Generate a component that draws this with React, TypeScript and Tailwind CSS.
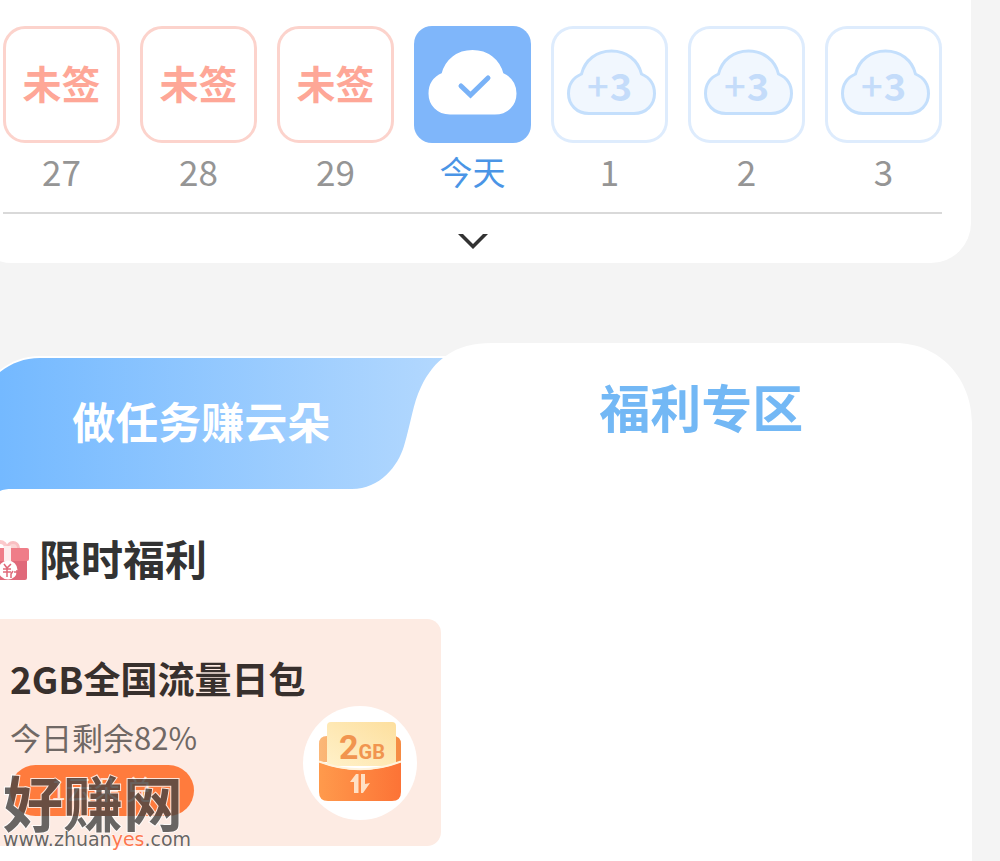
import { useState } from 'react'

type DayStatus = 'missed' | 'today' | 'upcoming'

const days: { label: string; status: DayStatus }[] = [
  { label: '27', status: 'missed' },
  { label: '28', status: 'missed' },
  { label: '29', status: 'missed' },
  { label: '今天', status: 'today' },
  { label: '1', status: 'upcoming' },
  { label: '2', status: 'upcoming' },
  { label: '3', status: 'upcoming' },
]

const cloudPath =
  'M38 87.5H83C95.5 87.5 103.5 78.5 103.5 67.5C103.5 58.5 98.5 51.5 90.5 48C87 34 75.500 25 60.500 25C45.500 25 34 34 30.500 48C22.500 51.500 17.500 58.500 17.500 67.500C17.500 78.500 25.500 87.500 38 87.500Z'

function DayTile({ status }: { status: DayStatus }) {
  if (status === 'missed') {
    return (
      <button className="grid aspect-square w-full place-items-center rounded-[22px] border-[3px] border-[#fcd3cc] text-[39px] leading-none font-bold text-[#fea797]">
        <span className="pb-1">未签</span>
      </button>
    )
  }

  if (status === 'today') {
    return (
      <button aria-label="已签到" className="block aspect-square w-full rounded-[18px] bg-[#7fb6fa]">
        <svg viewBox="2 0 117 117" className="block w-full">
          <path d={cloudPath} fill="#fff" stroke="#fff" strokeWidth="2" />
          <path d="M49 60L58.500 69L76 52" fill="none" stroke="#79b2f7" strokeWidth="5" strokeLinecap="round" />
        </svg>
      </button>
    )
  }

  return (
    <button className="grid aspect-square w-full place-items-center rounded-[22px] ring-[3px] ring-[#deecfd] ring-inset">
      <svg viewBox="0 0 117 117" className="col-start-1 row-start-1 block w-full">
        <path d={cloudPath} fill="#f1f7fe" stroke="#c4dffc" strokeWidth="3" />
      </svg>
      <span className="col-start-1 row-start-1 flex items-center gap-px text-[38px] leading-none font-bold text-[#c4dcfa]">
        <span className="font-medium">+</span>3
      </span>
    </button>
  )
}

function CheckInCard() {
  const [expanded, setExpanded] = useState(false)

  return (
    <section className="mr-[29px] -ml-7 rounded-b-[40px] bg-white pt-[26px] pr-[29px] pl-[31px]">
      <ol className="grid grid-cols-7 gap-5">
        {days.map((day) => (
          <li key={day.label}>
            <DayTile status={day.status} />
            <p
              className={
                day.status === 'today'
                  ? 'text-center text-[33px] leading-[56px] text-[#4a95e6]'
                  : 'text-center text-[35px] leading-[56px] text-[#959595]'
              }
            >
              {day.label}
            </p>
          </li>
        ))}
      </ol>
      <button
        aria-label="展开日历"
        aria-expanded={expanded}
        onClick={() => setExpanded(!expanded)}
        className="mt-[13px] flex h-[51px] w-full items-center justify-center border-t-2 border-[#d9d9d9]"
      >
        <svg viewBox="0 0 30 18" className="mt-1 h-[18px] w-[30px]">
          <path d="M0 2H5L15 12L25 2H30L15 17Z" fill="#333" />
        </svg>
      </button>
    </section>
  )
}

function TabBar() {
  return (
    <div role="tablist" className="relative flex h-[150px] w-full">
      <svg viewBox="0 0 972 150" preserveAspectRatio="none" className="absolute inset-0 h-full w-full">
        <defs>
          <linearGradient id="tab" x1="0" x2="1">
            <stop offset="0" stopColor="#74b9ff" />
            <stop offset="1" stopColor="#b5d9fe" />
          </linearGradient>
        </defs>
        <path d="M0 27C12 18 24 13 40 13H470V150H0Z" fill="#fff" />
        <path d="M0 29C12 20 24 15 40 15H460V146H12C7 146 3 146.500 0 148Z" fill="url(#tab)" />
        <path
          d="M352 146C380 146 398 123 404 103C411 80 413 60 421 44C434 17 454 0 492 0H895C940 0 972 36 972 80V150H352Z"
          fill="#fff"
        />
      </svg>
      <button
        role="tab"
        aria-selected="false"
        className="relative h-full w-[41%] pt-1 pl-1 text-[43px] leading-none font-bold text-white"
      >
        做任务赚云朵
      </button>
      <button
        role="tab"
        aria-selected="true"
        className="relative h-full flex-1 pb-6 pl-8 text-[51px] leading-none font-bold text-[#73b8f5]"
      >
        福利专区
      </button>
    </div>
  )
}

function GiftIcon() {
  return (
    <svg viewBox="0 0 30 42" className="h-[42px] w-[30px] shrink-0">
      <circle cx="0" cy="8" r="6" fill="none" stroke="#fbc9cb" strokeWidth="4" />
      <circle cx="13" cy="8" r="5.500" fill="#fbd5d5" stroke="#f9bfc2" strokeWidth="3" />
      <path d="M0 18H27V38Q27 40 25 40H0Z" fill="#e0697a" />
      <path d="M0 8H27Q29 8 29 10V19Q29 21 27 21H0Z" fill="#ef7d88" />
      <path d="M4 6H11V21H4Z" fill="#fdeeee" />
      <circle cx="8" cy="30" r="9.500" fill="#fff" />
      <path
        d="M4 24L7 28L11 24M3 29H11M3 32H11M7 28V37M13 31L11 34V38M14 32H18M17 30V37L15 38"
        fill="none"
        stroke="#e0697a"
        strokeWidth="1.500"
      />
    </svg>
  )
}

function DataPackIcon() {
  return (
    <svg viewBox="0 0 114 114" className="h-[114px] w-[114px] shrink-0">
      <defs>
        <linearGradient id="back" x1="0" x2="1">
          <stop offset="0" stopColor="#fbb879" />
          <stop offset="1" stopColor="#f58b42" />
        </linearGradient>
        <linearGradient id="sheet" x1="0" x2="1" y1="1" y2="0">
          <stop offset="0" stopColor="#fff1c9" />
          <stop offset="1" stopColor="#fddf9e" />
        </linearGradient>
        <linearGradient id="front" x1="0" x2="1">
          <stop offset="0" stopColor="#ff9a4c" />
          <stop offset="1" stopColor="#fc7336" />
        </linearGradient>
      </defs>
      <circle cx="57" cy="57" r="57" fill="#fff" />
      <path d="M16 38Q16 30 24 30H90Q98 30 98 38V56H16Z" fill="url(#back)" />
      <path d="M24 20Q24 16 28 16H89Q93 16 93 20V60H24Z" fill="url(#sheet)" />
      <path d="M16 56Q57 72 98 56V86Q98 95 89 95H25Q16 95 16 86Z" fill="url(#front)" />
      <path d="M16 55.500Q57 71 98 55.500" fill="none" stroke="#fff3dc" strokeWidth="2" />
      <path d="M47 76L53 68H55.500V87H51V76ZM58 68H62V78L67 77L60 87H58Z" fill="#ffe0c4" />
      <text x="36" y="53" fontSize="34" fontWeight="700" fontFamily="Roboto, sans-serif" fill="#f1954f">
        2<tspan fontSize="20">GB</tspan>
      </text>
    </svg>
  )
}

function Watermark() {
  return (
    <div className="pointer-events-none absolute top-[155px] left-[3px] text-[#444] opacity-80 select-none">
      <p className="text-[60px] leading-[54px] font-bold whitespace-nowrap [-webkit-text-stroke:2px_white] [paint-order:stroke_fill]">
        好赚网
      </p>
      <p className="mt-1 font-['DejaVu_Sans',sans-serif] text-[19px] leading-[14px] whitespace-nowrap [-webkit-text-stroke:1px_white] [paint-order:stroke_fill]">
        www.zhuan<span className="text-[#ff5a2a]">yes</span>.com
      </p>
    </div>
  )
}

function CouponCard() {
  return (
    <article className="relative flex h-[227px] w-[441px] max-w-full items-end justify-between rounded-r-[14px] bg-[#fdebe3] pr-6 pl-[10px]">
      <div className="self-start pt-9">
        <h3 className="text-[37px] leading-[46px] font-bold whitespace-nowrap text-[#38302d]">2GB全国流量日包</h3>
        <p className="pt-[14px] text-[31px] leading-[44px] whitespace-nowrap text-[#706865]">今日剩余82%</p>
        <button className="mt-[6px] block h-[51px] w-[184px] rounded-full bg-[#ff7b3d] pb-1 text-[27px] leading-none text-[#ffdccb]">
          1云朵 兑
        </button>
      </div>
      <div className="-ml-20 pb-[26px]">
        <DataPackIcon />
      </div>
      <Watermark />
    </article>
  )
}

export default function App() {
  return (
    <main className="flex min-h-screen flex-col overflow-x-hidden bg-[#f4f4f4] font-['Noto_Sans_CJK_SC',sans-serif]">
      <CheckInCard />
      <section className="mt-20 mr-7 flex flex-1 flex-col">
        <TabBar />
        <div className="flex-1 bg-white pb-[15px]">
          <h2 className="flex items-center pt-10 text-[42px] leading-[50px] font-bold text-[#333]">
            <GiftIcon />
            <span className="pb-[6px] pl-[9px]">限时福利</span>
          </h2>
          <div className="pt-[30px]">
            <CouponCard />
          </div>
        </div>
      </section>
    </main>
  )
}
